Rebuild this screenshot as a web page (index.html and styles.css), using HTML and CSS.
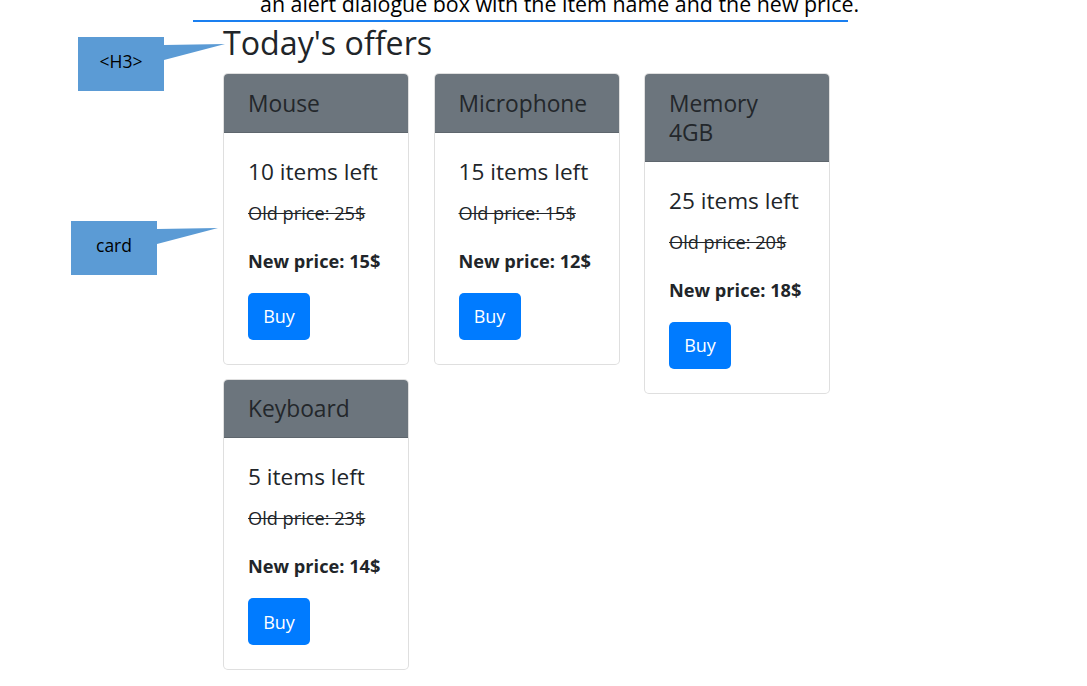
FILE: index.html
```html
<!DOCTYPE html>
<html>
<head>
<meta charset="utf-8">
<link rel="stylesheet" href="styles.css">
</head>
<body>
<div class="doc">
  <p class="intro">an alert dialogue box with the item name and the new price.</p>
  <div class="rule"></div>
  <section class="page">
    <h3 class="title">Today's offers</h3>
    <div class="deck">
      <div class="col">
        <div class="card">
          <div class="card-header"><h5 class="name">Mouse</h5></div>
          <div class="card-body">
            <h5 class="stock">10 items left</h5>
            <p class="old"><s>Old price: 25$</s></p>
            <p class="new">New price: 15$</p>
            <button class="btn">Buy</button>
          </div>
        </div>
        <div class="card">
          <div class="card-header"><h5 class="name">Keyboard</h5></div>
          <div class="card-body">
            <h5 class="stock">5 items left</h5>
            <p class="old"><s>Old price: 23$</s></p>
            <p class="new">New price: 14$</p>
            <button class="btn">Buy</button>
          </div>
        </div>
      </div>
      <div class="col">
        <div class="card">
          <div class="card-header"><h5 class="name">Microphone</h5></div>
          <div class="card-body">
            <h5 class="stock">15 items left</h5>
            <p class="old"><s>Old price: 15$</s></p>
            <p class="new">New price: 12$</p>
            <button class="btn">Buy</button>
          </div>
        </div>
      </div>
      <div class="col">
        <div class="card">
          <div class="card-header"><h5 class="name">Memory 4GB</h5></div>
          <div class="card-body">
            <h5 class="stock">25 items left</h5>
            <p class="old"><s>Old price: 20$</s></p>
            <p class="new">New price: 18$</p>
            <button class="btn">Buy</button>
          </div>
        </div>
      </div>
    </div>
  </section>

  <div class="callout callout-h3">
    <svg class="callout-svg" width="160" height="60" viewBox="0 0 160 60">
      <polygon points="0,0 86,0 86,8 147,7 86,23 86,54 0,54" fill="#5b9bd5"/>
    </svg>
    <span class="callout-text">&lt;H3&gt;</span>
  </div>
  <div class="callout callout-card">
    <svg class="callout-svg" width="160" height="60" viewBox="0 0 160 60">
      <polygon points="0,0 86,0 86,8 147,7 86,23 86,54 0,54" fill="#5b9bd5"/>
    </svg>
    <span class="callout-text">card</span>
  </div>
</div>
</body>
</html>
```

FILE: styles.css
```css
html, body {
  margin: 0;
  padding: 0;
  background: #ffffff;
}

.doc {
  position: relative;
  width: 1087px;
  height: 686px;
  overflow: hidden;
  font-family: "Open Sans", "Noto Sans", sans-serif;
  color: #212529;
}

.intro {
  margin: -9px 0 0 0;
  padding-left: 260px;
  font-size: 21.4px;
  line-height: 26px;
  color: #000000;
  white-space: nowrap;
}

.rule {
  margin: 3px 0 0 193px;
  width: 655px;
  height: 2px;
  background: #1a7ff0;
}

.page {
  padding-left: 223px;
}

.title {
  margin: 1px 0 10px 0;
  font-size: 32.2px;
  line-height: 40px;
  font-weight: 500;
  color: #212529;
}

.deck {
  display: flex;
  gap: 24.5px;
  align-items: flex-start;
}

.col {
  width: 186px;
  display: flex;
  flex-direction: column;
  gap: 14px;
}

.card {
  border: 1px solid rgba(0, 0, 0, 0.125);
  border-radius: 5px;
  overflow: hidden;
  background: #fff;
}

.card-header {
  background: #6c757d;
  padding: 14.5px 24px 14px 24px;
  border-bottom: 1px solid rgba(0, 0, 0, 0.125);
}

.name {
  margin: 0;
  font-size: 22.8px;
  line-height: 29px;
  font-weight: 500;
  color: #23272b;
}

.card-body {
  padding: 24px 24px 24px 24px;
}

.stock {
  margin: 0 0 10px 0;
  font-size: 22.6px;
  line-height: 29px;
  font-weight: 500;
  color: #212529;
}

.old {
  margin: 0 0 19px 0;
  padding-top: 3px;
  font-size: 18.2px;
  line-height: 29px;
}

.new {
  margin: 0 0 17px 0;
  font-size: 18.2px;
  line-height: 29px;
  font-weight: 700;
}

.btn {
  display: block;
  margin: 0;
  width: 62px;
  height: 47px;
  padding: 0;
  border: 0;
  border-radius: 5px;
  background: #007bff;
  color: #ffffff;
  font-family: "Open Sans", "Noto Sans", sans-serif;
  font-size: 18px;
}

.callout {
  position: absolute;
  width: 160px;
  height: 60px;
}

.callout-h3 {
  left: 78px;
  top: 37px;
}

.callout-card {
  left: 71px;
  top: 221px;
}

.callout-svg {
  position: absolute;
  left: 0;
  top: 0;
}

.callout-text {
  position: absolute;
  left: 0;
  top: -3px;
  width: 86px;
  height: 54px;
  display: flex;
  align-items: center;
  justify-content: center;
  font-size: 17.5px;
  color: #000;
}
```
